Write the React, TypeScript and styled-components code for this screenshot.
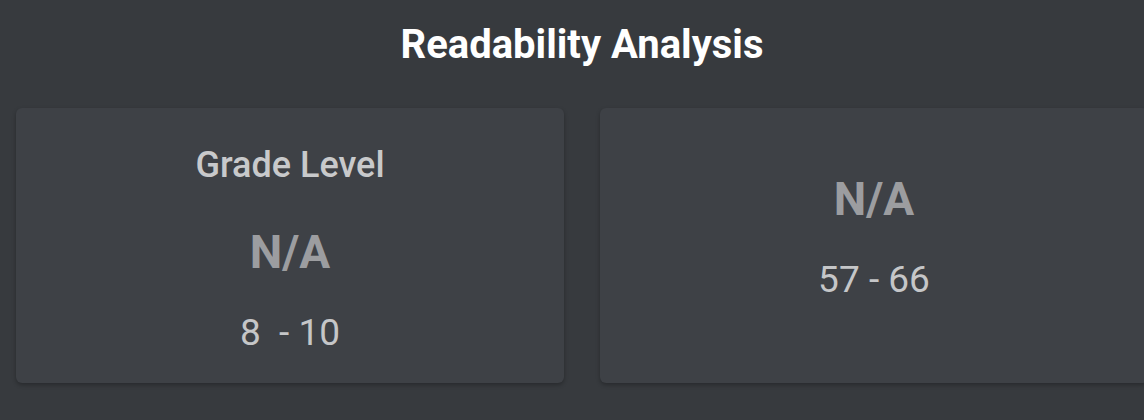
import React from 'react'
import styled, { createGlobalStyle } from 'styled-components'

const GlobalStyle = createGlobalStyle`
  html, body {
    margin: 0;
    padding: 0;
    background: #373a3e;
    overflow: hidden;
  }
  body {
    font-family: Roboto, "Liberation Sans", Arial, sans-serif;
  }
`

const Page = styled.div`
  width: 1164px;
  height: 420px;
  box-sizing: border-box;
  padding: 16px 16px 0;
  background: #373a3e;
`

const Title = styled.h1`
  margin: 0;
  height: 92px;
  box-sizing: border-box;
  padding-top: 9px;
  font-size: 40px;
  font-weight: 700;
  line-height: 1;
  color: #ffffff;
  text-align: center;
`

const CardRow = styled.div`
  display: grid;
  grid-template-columns: 548px 548px;
  gap: 36px;
`

const Card = styled.div<{ $padTop: number }>`
  height: 275px;
  box-sizing: border-box;
  padding-top: ${(p) => p.$padTop}px;
  background: #3e4146;
  border-radius: 6px;
  box-shadow: 0 2px 4px rgba(0, 0, 0, 0.28);
  display: flex;
  flex-direction: column;
  align-items: center;
  text-align: center;
`

const CardLabel = styled.div`
  font-size: 36px;
  font-weight: 500;
  line-height: 1;
  color: #c8c9cb;
  margin-bottom: 46px;
`

const Score = styled.div`
  font-size: 46px;
  font-weight: 700;
  line-height: 1;
  color: #9c9da0;
  margin-bottom: 39px;
`

const Range = styled.div`
  font-size: 37px;
  font-weight: 400;
  line-height: 1;
  color: #c5c6c8;
  white-space: pre;
`

type ScoreCardProps = {
  label?: string
  score: string
  range: string
}

const ScoreCard = ({ label, score, range }: ScoreCardProps) => (
  <Card $padTop={label ? 39 : 68}>
    {label && <CardLabel>{label}</CardLabel>}
    <Score>{score}</Score>
    <Range>{range}</Range>
  </Card>
)

const App = () => {
  return (
    <Page>
      <GlobalStyle />
      <Title>Readability Analysis</Title>
      <CardRow>
        <ScoreCard label="Grade Level" score="N/A" range="8  - 10" />
        <ScoreCard score="N/A" range="57 - 66" />
      </CardRow>
    </Page>
  )
}

export default App
